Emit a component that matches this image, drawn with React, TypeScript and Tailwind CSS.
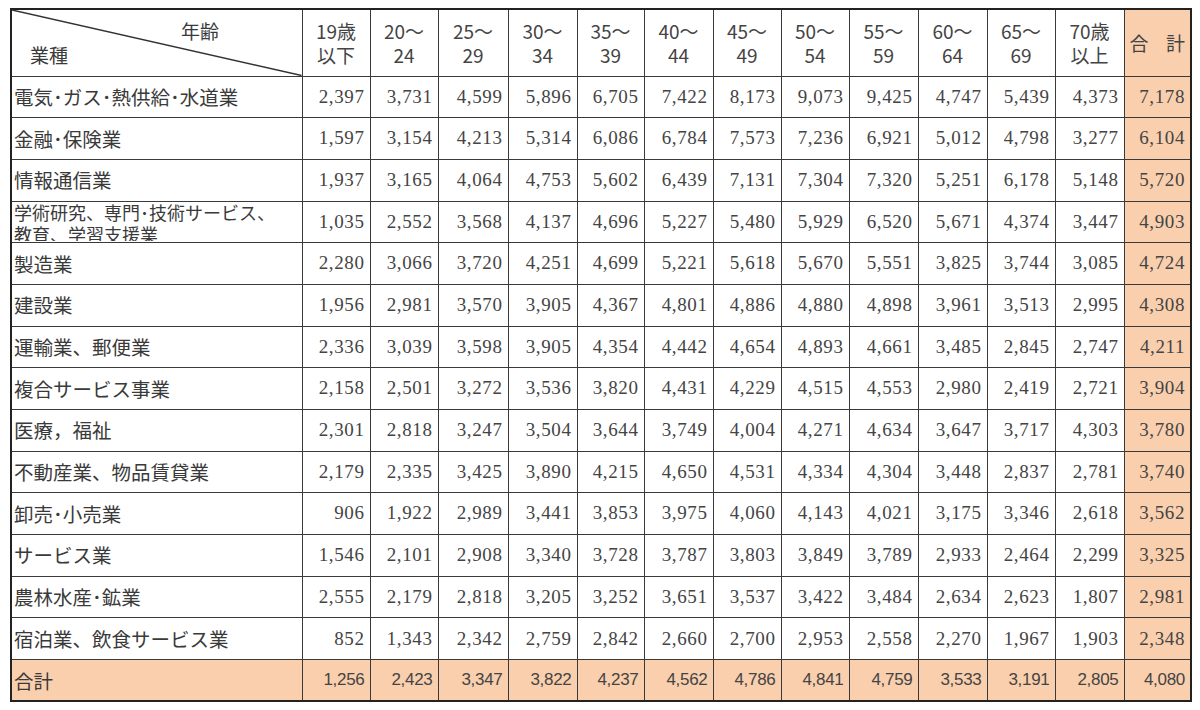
const ages = [
  ["19歳", "以下"],
  ["20～", "24"],
  ["25～", "29"],
  ["30～", "34"],
  ["35～", "39"],
  ["40～", "44"],
  ["45～", "49"],
  ["50～", "54"],
  ["55～", "59"],
  ["60～", "64"],
  ["65～", "69"],
  ["70歳", "以上"],
];

const colWidths = [291, 68, 68, 70, 69, 67, 69, 68, 68, 69, 69, 68, 69, 67];

const rows: { label: string; values: string[] }[] = [
  { label: "電気･ガス･熱供給･水道業", values: ["2,397", "3,731", "4,599", "5,896", "6,705", "7,422", "8,173", "9,073", "9,425", "4,747", "5,439", "4,373", "7,178"] },
  { label: "金融･保険業", values: ["1,597", "3,154", "4,213", "5,314", "6,086", "6,784", "7,573", "7,236", "6,921", "5,012", "4,798", "3,277", "6,104"] },
  { label: "情報通信業", values: ["1,937", "3,165", "4,064", "4,753", "5,602", "6,439", "7,131", "7,304", "7,320", "5,251", "6,178", "5,148", "5,720"] },
  { label: "学術研究、専門･技術サービス、\n教育、学習支援業", values: ["1,035", "2,552", "3,568", "4,137", "4,696", "5,227", "5,480", "5,929", "6,520", "5,671", "4,374", "3,447", "4,903"] },
  { label: "製造業", values: ["2,280", "3,066", "3,720", "4,251", "4,699", "5,221", "5,618", "5,670", "5,551", "3,825", "3,744", "3,085", "4,724"] },
  { label: "建設業", values: ["1,956", "2,981", "3,570", "3,905", "4,367", "4,801", "4,886", "4,880", "4,898", "3,961", "3,513", "2,995", "4,308"] },
  { label: "運輸業、郵便業", values: ["2,336", "3,039", "3,598", "3,905", "4,354", "4,442", "4,654", "4,893", "4,661", "3,485", "2,845", "2,747", "4,211"] },
  { label: "複合サービス事業", values: ["2,158", "2,501", "3,272", "3,536", "3,820", "4,431", "4,229", "4,515", "4,553", "2,980", "2,419", "2,721", "3,904"] },
  { label: "医療，福祉", values: ["2,301", "2,818", "3,247", "3,504", "3,644", "3,749", "4,004", "4,271", "4,634", "3,647", "3,717", "4,303", "3,780"] },
  { label: "不動産業、物品賃貸業", values: ["2,179", "2,335", "3,425", "3,890", "4,215", "4,650", "4,531", "4,334", "4,304", "3,448", "2,837", "2,781", "3,740"] },
  { label: "卸売･小売業", values: ["906", "1,922", "2,989", "3,441", "3,853", "3,975", "4,060", "4,143", "4,021", "3,175", "3,346", "2,618", "3,562"] },
  { label: "サービス業", values: ["1,546", "2,101", "2,908", "3,340", "3,728", "3,787", "3,803", "3,849", "3,789", "2,933", "2,464", "2,299", "3,325"] },
  { label: "農林水産･鉱業", values: ["2,555", "2,179", "2,818", "3,205", "3,252", "3,651", "3,537", "3,422", "3,484", "2,634", "2,623", "1,807", "2,981"] },
  { label: "宿泊業、飲食サービス業", values: ["852", "1,343", "2,342", "2,759", "2,842", "2,660", "2,700", "2,953", "2,558", "2,270", "1,967", "1,903", "2,348"] },
];

const totals = ["1,256", "2,423", "3,347", "3,822", "4,237", "4,562", "4,786", "4,841", "4,759", "3,533", "3,191", "2,805", "4,080"];

export default function App() {
  return (
    <div className="w-[1200px] h-[710px] bg-white pt-[8px] pl-[10px] text-[#3a3a3a] font-['Noto_Sans_CJK_JP',sans-serif]">
      <table className="table-fixed border-collapse border-2 border-[#222] w-[1181px]">
        <colgroup>
          {colWidths.map((w, i) => (
            <col key={i} style={{ width: w }} />
          ))}
        </colgroup>
        <thead>
          <tr className="h-[67px]">
            {/* diagonal corner cell */}
            <th className="relative border border-[#3a3a3a] p-0 font-normal text-left">
              <svg className="absolute inset-0 w-full h-full" preserveAspectRatio="none">
                <line x1="0" y1="0" x2="100%" y2="100%" stroke="#333" strokeWidth="1.5" />
              </svg>
              <div className="text-[19px] leading-[24px]">
                <div className="pl-[169px]">年齢</div>
                <div className="pl-[18px]">業種</div>
              </div>
            </th>
            {ages.map(([a, b]) => (
              <th key={a} className="border border-[#3a3a3a] p-0 font-normal text-center text-[19px] leading-[24px] text-[#444]">
                <div>{a}</div>
                <div>{b}</div>
              </th>
            ))}
            <th className="border border-[#3a3a3a] bg-[#f9cfad] p-0 font-normal text-[19px] text-[#444]">
              <div className="flex justify-between px-[5px]">
                <span>合</span>
                <span>計</span>
              </div>
            </th>
          </tr>
        </thead>
        <tbody>
          {rows.map((row) => (
            <tr key={row.label} className="h-[41.7px]">
              <td className="border border-[#3a3a3a] p-0 pl-[2px]">
                {row.label.includes("\n") ? (
                  <div className="h-[40px] overflow-hidden text-[18px] leading-[22px] whitespace-pre -mt-[1px]">
                    {row.label}
                  </div>
                ) : (
                  <div className="text-[19.5px] leading-[24px] whitespace-nowrap">{row.label}</div>
                )}
              </td>
              {row.values.map((v, i) => (
                <td
                  key={i}
                  className={`border border-[#3a3a3a] p-0 pr-[5px] text-right text-[19px] tracking-[0.6px] text-[#444] font-['Liberation_Serif',serif] ${
                    i === 12 ? "bg-[#f9cfad]" : ""
                  }`}
                >
                  {v}
                </td>
              ))}
            </tr>
          ))}
          <tr className="h-[41.7px] bg-[#f9cfad]">
            <td className="border border-[#3a3a3a] p-0 pl-[2px] text-[19.5px]">合計</td>
            {totals.map((v, i) => (
              <td
                key={i}
                className="border border-[#3a3a3a] p-0 pr-[5px] text-right text-[17px] tracking-[-0.3px] text-[#444] font-['Liberation_Sans',sans-serif]"
              >
                {v}
              </td>
            ))}
          </tr>
        </tbody>
      </table>
    </div>
  );
}
